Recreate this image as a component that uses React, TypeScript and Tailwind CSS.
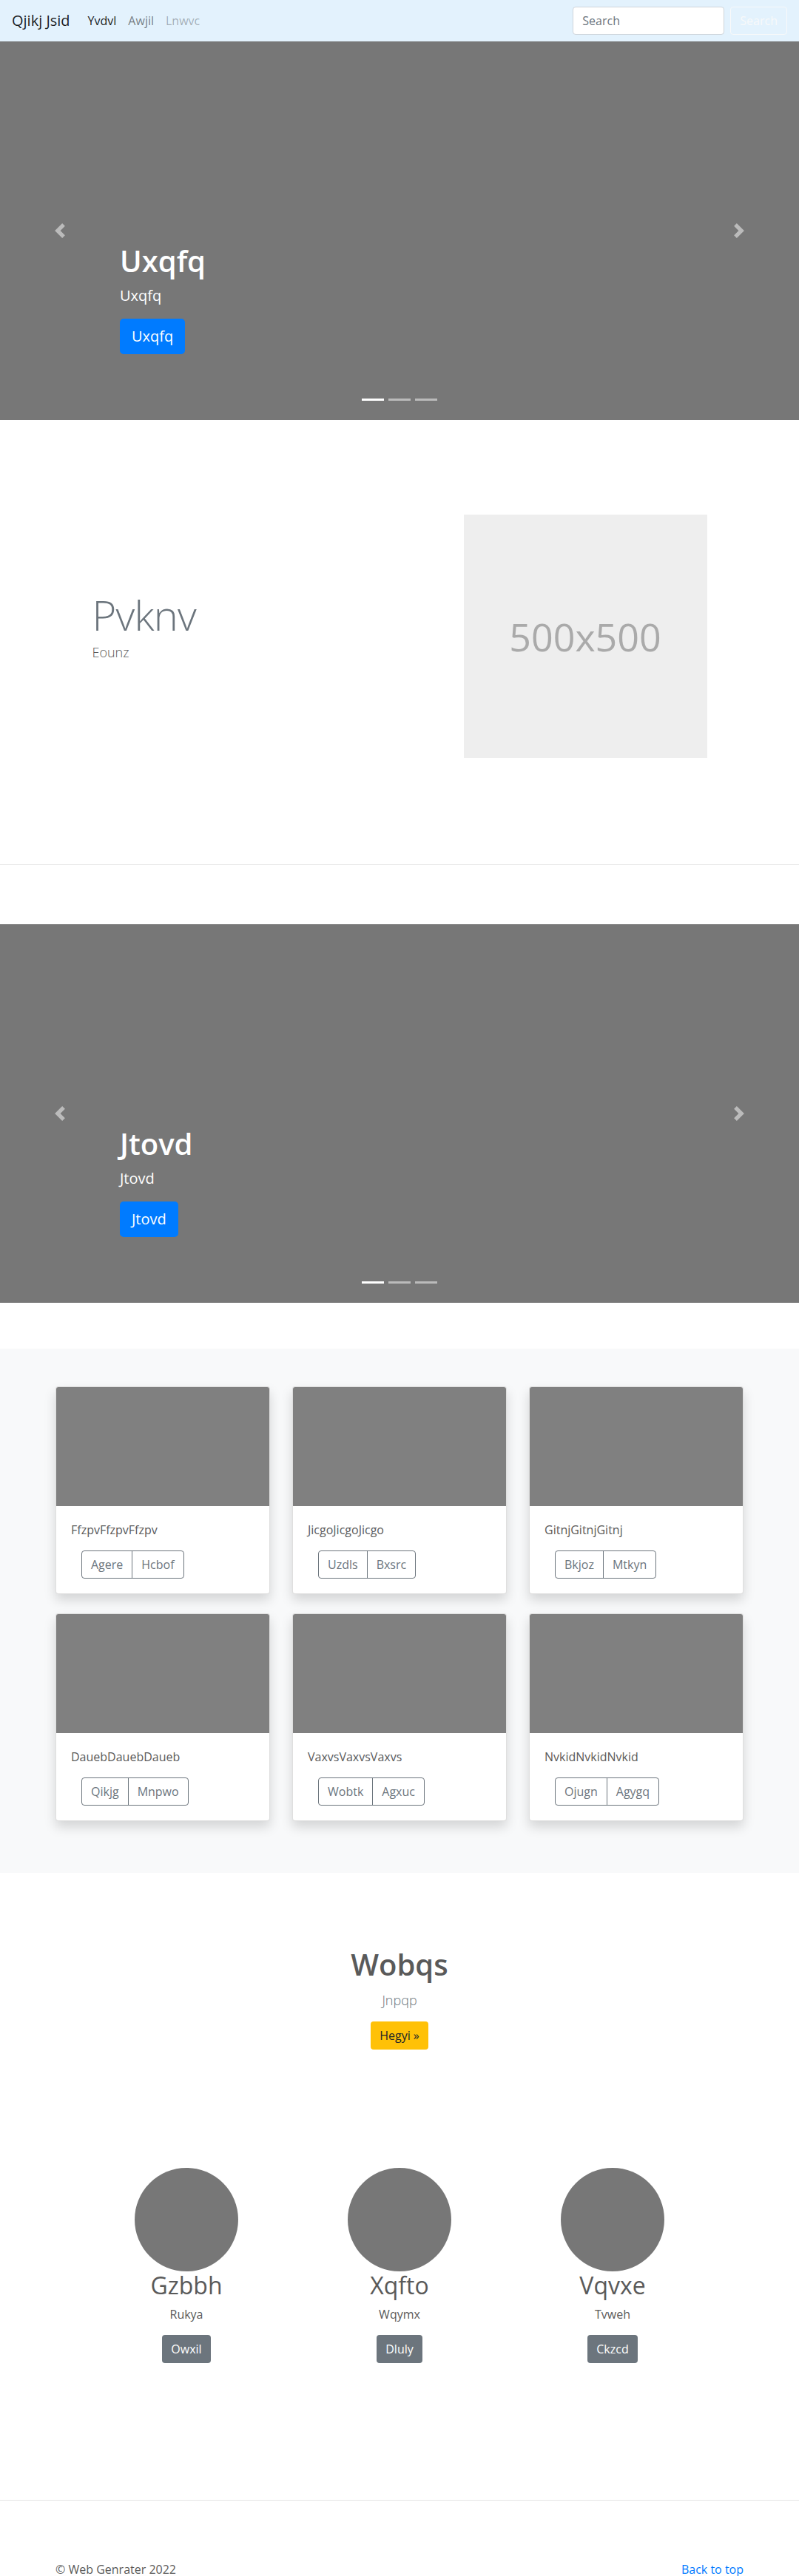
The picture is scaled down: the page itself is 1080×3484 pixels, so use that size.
import React from "react";

const cards = [
  { text: "FfzpvFfzpvFfzpv", a: "Agere", b: "Hcbof" },
  { text: "JicgoJicgoJicgo", a: "Uzdls", b: "Bxsrc" },
  { text: "GitnjGitnjGitnj", a: "Bkjoz", b: "Mtkyn" },
  { text: "DauebDauebDaueb", a: "Qikjg", b: "Mnpwo" },
  { text: "VaxvsVaxvsVaxvs", a: "Wobtk", b: "Agxuc" },
  { text: "NvkidNvkidNvkid", a: "Ojugn", b: "Agygq" },
];

const people = [
  { name: "Gzbbh", sub: "Rukya", btn: "Owxil" },
  { name: "Xqfto", sub: "Wqymx", btn: "Dluly" },
  { name: "Vqvxe", sub: "Tvweh", btn: "Ckzcd" },
];

function Navbar() {
  return (
    <nav className="h-14 bg-[#e3f2fd] px-4 flex items-center">
      <a className="text-[20px] leading-[30px] text-black/90 mr-4">Qjikj Jsid</a>
      <ul className="flex items-center">
        <li className="px-2 text-black/90">Yvdvl</li>
        <li className="px-2 text-black/50">Awjil</li>
        <li className="px-2 text-black/30">Lnwvc</li>
      </ul>
      <form className="ml-auto flex items-center">
        <input
          placeholder="Search"
          className="w-[205px] h-[38px] px-3 mr-2 bg-white border border-[#ced4da] rounded text-base text-[#495057] placeholder:text-[#6c757d] outline-none"
        />
        <button
          type="button"
          className="h-[38px] px-3 border border-[#f8f9fa] rounded text-base text-[#f8f9fa]"
        >
          Search
        </button>
      </form>
    </nav>
  );
}

function Carousel({ title }: { title: string }) {
  return (
    <div className="relative h-[512px] bg-[#777] flex items-end">
      {/* Caption */}
      <div className="pl-[162px] pb-[89px] text-white">
        <h1 className="text-[40px] leading-[48px] font-semibold mb-2">{title}</h1>
        <p className="text-[20px] leading-[30px] mb-4">{title}</p>
        <a className="inline-block bg-[#007bff] text-white text-[20px] leading-[30px] px-4 py-[9px] rounded-[5px]">
          {title}
        </a>
      </div>

      {/* Controls */}
      <div className="absolute left-0 top-0 bottom-0 w-[15%] flex items-center justify-center opacity-50">
        <svg width="20" height="20" viewBox="0 0 8 8" fill="#fff">
          <path d="M5.25 0l-4 4 4 4 1.5-1.5L4.25 4l2.5-2.5L5.25 0z" />
        </svg>
      </div>
      <div className="absolute right-0 top-0 bottom-0 w-[15%] flex items-center justify-center opacity-50">
        <svg width="20" height="20" viewBox="0 0 8 8" fill="#fff">
          <path d="M2.75 0l-1.5 1.5L3.75 4l-2.5 2.5L2.75 8l4-4-4-4z" />
        </svg>
      </div>

      {/* Indicators */}
      <ol className="absolute left-0 right-0 bottom-0 mb-4 flex justify-center">
        <li className="w-[30px] h-[3px] mx-[3px] my-[10px] bg-white" />
        <li className="w-[30px] h-[3px] mx-[3px] my-[10px] bg-white opacity-50" />
        <li className="w-[30px] h-[3px] mx-[3px] my-[10px] bg-white opacity-50" />
      </ol>
    </div>
  );
}

function Card({ text, a, b }: { text: string; a: string; b: string }) {
  return (
    <div className="bg-white border border-black/[0.125] rounded shadow-[0_8px_16px_rgba(0,0,0,0.15)] overflow-hidden">
      <div className="h-[161px] bg-[#808080]" />
      <div className="p-5">
        <p className="text-base leading-6 mb-4">{text}</p>
        <div className="ml-[14px] inline-flex border border-[#6c757d] rounded text-[#6c757d]">
          <button className="px-3 py-[6px] leading-6">{a}</button>
          <button className="px-3 py-[6px] leading-6 border-l border-[#6c757d]">{b}</button>
        </div>
      </div>
    </div>
  );
}

export default function App() {
  return (
    <div className="font-['Segoe_UI','Open_Sans',sans-serif] text-base text-[#5a5a5a] bg-white">
      <Navbar />
      <Carousel title="Uxqfq" />

      {/* Featurette */}
      <section className="pt-[128px] pb-[144px]">
        <div className="mx-auto w-[831px] flex items-center justify-between">
          <div>
            <h2 className="text-[56px] leading-[67px] font-light text-[#6c757d] tracking-[-0.8px] mb-1">
              Pvknv
            </h2>
            <p className="text-[18px] leading-[27px] font-light mb-7">Eounz</p>
          </div>
          <div className="w-[329px] h-[329px] bg-[#eee] flex items-center justify-center text-[#aaa] text-[52px]">
            500x500
          </div>
        </div>
      </section>
      <div className="h-px bg-black/10" />

      <div className="mt-20">
        <Carousel title="Jtovd" />
      </div>

      {/* Album */}
      <section className="mt-[62px] bg-[#f8f9fa] pt-[51px] pb-[70px]">
        <div className="mx-auto w-[930px] grid grid-cols-3 gap-x-[30px] gap-y-[26px]">
          {cards.map((c) => (
            <Card key={c.text} {...c} />
          ))}
        </div>
      </section>

      {/* Jumbotron */}
      <section className="pt-[100px] text-center">
        <h1 className="text-[40px] leading-[48px] font-semibold">Wobqs</h1>
        <p className="mt-[11px] text-[18px] leading-[27px] font-light text-[#6c757d]">Jnpqp</p>
        <a className="inline-block mt-[15px] bg-[#ffc107] text-[#212529] px-3 py-[7px] leading-6 rounded">
          Hegyi »
        </a>
      </section>

      {/* Marketing */}
      <section className="mt-[160px] mx-auto w-[864px] grid grid-cols-3 text-center">
        {people.map((p) => (
          <div key={p.name} className="flex flex-col items-center">
            <div className="w-[140px] h-[140px] rounded-full bg-[#777]" />
            <h2 className="text-[32px] leading-[38px] mb-2">{p.name}</h2>
            <p className="leading-6 mb-4">{p.sub}</p>
            <a className="inline-block bg-[#6c757d] text-white px-3 py-[7px] leading-6 rounded">{p.btn}</a>
          </div>
        ))}
      </section>

      <div className="mt-[185px] h-px bg-black/10" />

      {/* Footer */}
      <footer className="pt-[81px] mx-auto w-[930px] flex justify-between leading-6">
        <p>© Web Genrater 2022</p>
        <a className="text-[#007bff]">Back to top</a>
      </footer>
    </div>
  );
}
